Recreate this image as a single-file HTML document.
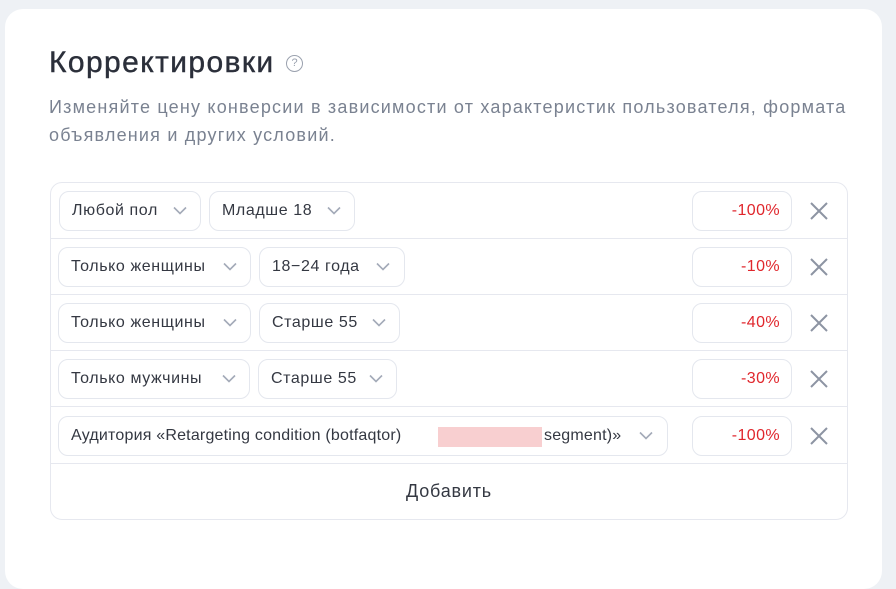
<!DOCTYPE html>
<html><head><meta charset="utf-8"><style>
*{margin:0;padding:0;box-sizing:border-box}
body{width:896px;height:562px;background:#eef1f5;font-family:"Liberation Sans",sans-serif;position:relative;overflow:hidden}
.card{position:absolute;left:5px;top:9px;width:877px;height:580px;background:#fff;border-radius:18px}
.abs{position:absolute}
h1{position:absolute;left:49px;top:46px;font-size:30px;font-weight:400;color:#2b2f3a;letter-spacing:1.4px;-webkit-text-stroke:0.4px #2b2f3a}
.q{position:absolute;left:286px;top:55px;width:17px;height:17px;border:1.5px solid #9aa1ae;border-radius:50%;font-size:11px;color:#9aa1ae;text-align:center;line-height:14px}
.desc{position:absolute;left:49px;top:93px;width:840px;font-size:18px;line-height:28px;color:#7a8291;letter-spacing:1.2px;white-space:nowrap}
.tbl{position:absolute;left:50px;top:182px;width:798px;height:338px;border:1px solid #e6e8ef;border-radius:12px}
.line{position:absolute;left:50px;width:798px;height:1px;background:#e6e8ef}
.pill{position:absolute;height:40px;border:1px solid #e4e7ee;border-radius:10px;font-size:16px;color:#343842;line-height:38px;padding-left:12px;white-space:nowrap;letter-spacing:0.6px}
.chev{position:absolute;top:14px;width:14px;height:9px}
.pct{position:absolute;left:692px;width:100px;height:40px;border:1px solid #e4e7ee;border-radius:10px;font-size:16px;color:#e0262c;line-height:38px;text-align:right;padding-right:11px;letter-spacing:0.4px}
.x{position:absolute;left:810px;width:18px;height:18px}
.add{position:absolute;left:50px;top:481px;width:798px;text-align:center;font-size:18px;color:#343842;letter-spacing:0.8px}
</style></head><body>
<div class="card"></div>
<h1>Корректировки</h1>
<div class="q">?</div>
<div class="desc">Изменяйте цену конверсии в зависимости от характеристик пользователя, формата<br>объявления и других условий.</div>
<div class="tbl"></div>
<div class="line" style="top:238px"></div>
<div class="line" style="top:294px"></div>
<div class="line" style="top:350px"></div>
<div class="line" style="top:406px"></div>
<div class="line" style="top:463px"></div>

<svg width="0" height="0" style="position:absolute"><defs>
<symbol id="c" viewBox="0 0 14 9"><path d="M1 1.5L7 7.5L13 1.5" fill="none" stroke="#a3aab8" stroke-width="1.6"/></symbol>
<symbol id="x" viewBox="0 0 18 18"><path d="M1 1L17 17M17 1L1 17" stroke="#8d94a3" stroke-width="2"/></symbol>
</defs></svg>

<div class="pill" style="left:59px;top:191px;width:142px">Любой пол<svg class="chev" style="left:113px"><use href="#c"/></svg></div>
<div class="pill" style="left:209px;top:191px;width:146px">Младше 18<svg class="chev" style="left:117px"><use href="#c"/></svg></div>
<div class="pill" style="left:58px;top:247px;width:193px">Только женщины<svg class="chev" style="left:164px"><use href="#c"/></svg></div>
<div class="pill" style="left:259px;top:247px;width:146px">18−24 года<svg class="chev" style="left:116px"><use href="#c"/></svg></div>
<div class="pill" style="left:58px;top:303px;width:193px">Только женщины<svg class="chev" style="left:164px"><use href="#c"/></svg></div>
<div class="pill" style="left:259px;top:303px;width:141px">Старше 55<svg class="chev" style="left:112px"><use href="#c"/></svg></div>
<div class="pill" style="left:58px;top:359px;width:192px">Только мужчины<svg class="chev" style="left:163px"><use href="#c"/></svg></div>
<div class="pill" style="left:258px;top:359px;width:139px">Старше 55<svg class="chev" style="left:110px"><use href="#c"/></svg></div>
<div class="pill" style="left:58px;top:416px;width:610px;letter-spacing:0.2px"><span style="display:inline-block;width:366px;overflow:hidden">Аудитория «Retargeting condition (botfaqtor)</span><span class="abs" style="left:379px;top:10px;width:104px;height:20px;background:#f8cfd0"></span><span class="abs" style="left:485px;top:0">segment)»</span><svg class="chev" style="left:580px"><use href="#c"/></svg></div>

<div class="pct" style="top:191px">-100%</div>
<div class="pct" style="top:247px">-10%</div>
<div class="pct" style="top:303px">-40%</div>
<div class="pct" style="top:359px">-30%</div>
<div class="pct" style="top:416px">-100%</div>
<svg class="x" style="top:202px"><use href="#x"/></svg>
<svg class="x" style="top:258px"><use href="#x"/></svg>
<svg class="x" style="top:314px"><use href="#x"/></svg>
<svg class="x" style="top:370px"><use href="#x"/></svg>
<svg class="x" style="top:427px"><use href="#x"/></svg>
<div class="add">Добавить</div>
</body></html>
